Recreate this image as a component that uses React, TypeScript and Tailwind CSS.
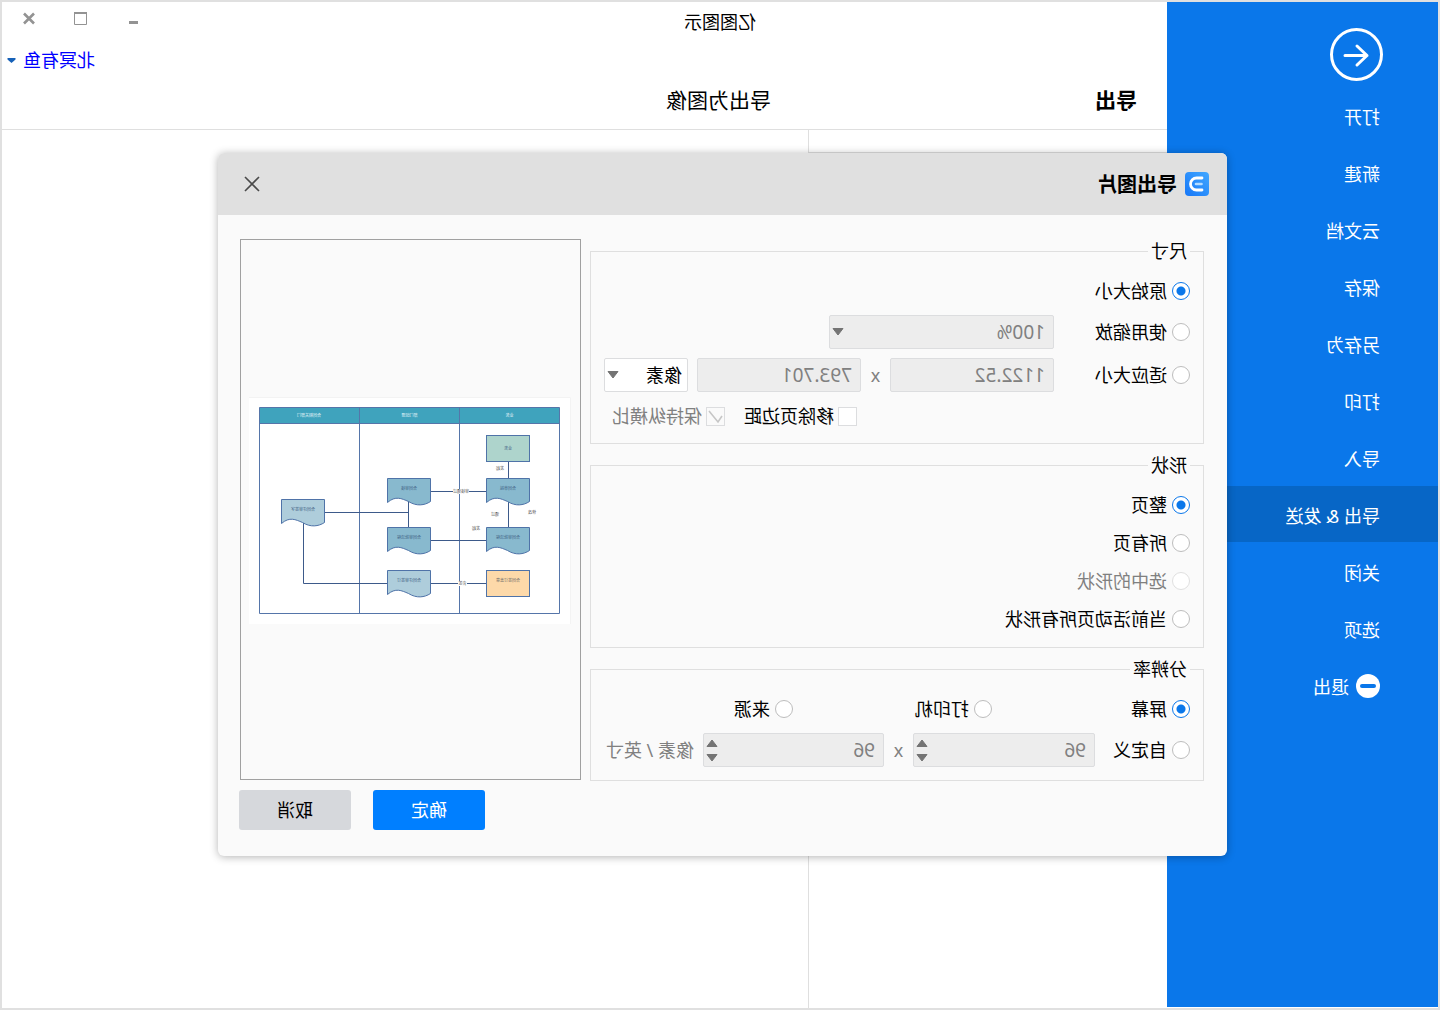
import { ReactNode, useState } from 'react';

const MENU = ['打开', '新建', '云文档', '保存', '另存为', '打印', '导入', '导出 & 发送', '关闭', '选项'];
const ACTIVE = '导出 & 发送';

const DOC_FILL = '#88b9ce';
const DOC_LIGHT = '#aecddb';

interface ChoiceProps {
  name: string;
  value: string;
  current: string;
  onPick: (value: string) => void;
  disabled?: boolean;
  className?: string;
}

function Choice({ name, value, current, onPick, disabled, className = '' }: ChoiceProps) {
  return (
    <label className={`flex h-[26px] shrink-0 items-center gap-[5px] ${disabled ? 'text-[#808080]' : 'text-black'} ${className}`}>
      <input
        type="radio"
        name={name}
        value={value}
        checked={current === value}
        disabled={disabled}
        onChange={() => onPick(value)}
        className="size-[18px] shrink-0 appearance-none rounded-full border border-[#bdbdbd] bg-white checked:border-[#0a77ea] checked:bg-[radial-gradient(circle,#0a77ea_0,#0a77ea_4px,#fff_5px)] disabled:border-[#e0e0e0]"
      />
      {value}
    </label>
  );
}

function Group({ title, className = '', children }: { title: string; className?: string; children: ReactNode }) {
  return (
    <fieldset className={`border border-[#dfdfdf] px-[13px] ${className}`}>
      <legend className="px-[3px] leading-[26px]">{title}</legend>
      {children}
    </fieldset>
  );
}

function Arrow({ up, className = '' }: { up?: boolean; className?: string }) {
  return (
    <svg viewBox="0 0 12 8" className={`h-2 w-3 ${className}`}>
      <path d={up ? 'M1 7.5L6 1L11 7.5Z' : 'M1 0.5L6 7L11 0.5Z'} fill="#747474" stroke="#747474" strokeLinejoin="round" />
    </svg>
  );
}

function Picker({ label, value, disabled, className = '' }: { label: string; value: string; disabled?: boolean; className?: string }) {
  return (
    <div className={`relative shrink-0 ${className}`}>
      <select
        aria-label={label}
        disabled={disabled}
        defaultValue={value}
        className="h-[34px] w-full appearance-none rounded-[2px] border border-[#dcdddf] bg-white pl-[5px] text-black opacity-100 disabled:bg-[#ededed] disabled:pl-2 disabled:text-[19px] disabled:text-[#808080]"
      >
        <option>{value}</option>
      </select>
      <Arrow className="pointer-events-none absolute top-[13px] right-[3px]" />
    </div>
  );
}

function NumberBox({ label, value, spin, className = '' }: { label: string; value: string; spin?: boolean; className?: string }) {
  return (
    <div className={`relative shrink-0 ${className}`}>
      <input
        type="text"
        inputMode="decimal"
        aria-label={label}
        defaultValue={value}
        disabled
        className="h-[34px] w-full rounded-[2px] border border-[#dcdddf] bg-[#ededed] px-2 text-[19px] text-[#808080]"
      />
      {spin && (
        <span className="absolute inset-y-0 right-[3px] flex flex-col justify-center gap-[7px]">
          <button type="button" disabled aria-label="增加"><Arrow up className="block" /></button>
          <button type="button" disabled aria-label="减少"><Arrow className="block" /></button>
        </span>
      )}
    </div>
  );
}

function Times() {
  return <span className="w-[29px] shrink-0 text-center text-[#808080]">x</span>;
}

function Doc({ x, y, fill, text }: { x: number; y: number; fill: string; text: string }) {
  return (
    <g transform={`translate(${x} ${y})`}>
      <path d="M0 0H43V24C35 17 29 20 22 23C14 28 6 27 0 23Z" fill={fill} stroke="#4f73a8" />
      <text x="21.5" y="11" fill="#3f6184">{text}</text>
    </g>
  );
}

function Diagram() {
  return (
    <svg viewBox="0 0 322 227" className="mt-px w-[322px] bg-white font-[Noto_Sans_CJK_SC]" fontSize="4" textAnchor="middle">
      <path d="M0.5 227V0.5H322" fill="none" stroke="#f3f3f3" />
      <rect x="11.5" y="10.5" width="300" height="16" fill="#3fa3bd" />
      <path d="M11.5 10.5H311.5V216.5H11.5ZM11.5 26.5H311.5M111.5 10.5V216.5M211.5 10.5V216.5" fill="none" stroke="#5575a9" />
      <g fill="#e8f6fa">
        <text x="61.5" y="20">业务</text>
        <text x="161.5" y="20">部门经理</text>
        <text x="262" y="20">合同相关部门</text>
      </g>
      <path
        d="M62.5 65V81M62.5 104V130M85 94.5H140M85 143.5H140M85 186.5H140M162.5 104V130M162.5 115.5H246M267.5 126V186.5H184"
        fill="none"
        stroke="#3d5a8a"
      />
      <rect x="41.5" y="38.5" width="43" height="26" fill="#aed4cc" stroke="#4f73a8" />
      <text x="63" y="53" fill="#3f6184">业务</text>
      <Doc x={41.5} y={81.5} fill={DOC_FILL} text="合同草拟" />
      <Doc x={41.5} y={130.5} fill={DOC_FILL} text="合同审批流程" />
      <rect x="41.5" y="173.5" width="43" height="26" fill="#fdd9a9" stroke="#4f73a8" />
      <text x="63" y="185" fill="#6d6a68">合同签订盖章</text>
      <Doc x={140.5} y={81.5} fill={DOC_FILL} text="合同审核" />
      <Doc x={140.5} y={130.5} fill={DOC_FILL} text="合同审批流程" />
      <Doc x={140.5} y={173.5} fill={DOC_LIGHT} text="合同评审签订" />
      <Doc x={246.5} y={102.5} fill={DOC_LIGHT} text="合同评审签字" />
      <rect x="102" y="92" width="16" height="5" fill="#fff" />
      <rect x="104" y="184" width="9" height="5" fill="#fff" />
      <g fill="#555">
        <text x="71" y="72.5">发起</text>
        <text x="110" y="96">审核通过</text>
        <text x="76" y="119">通过</text>
        <text x="39" y="117">修改</text>
        <text x="95" y="132.5">发起</text>
        <text x="108.5" y="188">会签</text>
      </g>
    </svg>
  );
}

function ExportDialog() {
  const [size, setSize] = useState('原始大小');
  const [shape, setShape] = useState('整页');
  const [dpi, setDpi] = useState('屏幕');

  return (
    <div role="dialog" aria-labelledby="export-title" className="w-full max-w-[1009px] rounded-md bg-[#fafafa] shadow-[0_1px_8px_rgba(0,0,0,0.3)]">
      <header className="flex h-[62px] items-center rounded-t-md bg-[#e0e0e0] pr-[26px] pl-[18px]">
        <svg viewBox="0 0 24 24" className="size-6">
          <defs>
            <linearGradient id="logo" x1="0" y1="0" x2="1" y2="1">
              <stop offset="0" stopColor="#42a8ff" />
              <stop offset="1" stopColor="#1677f8" />
            </linearGradient>
          </defs>
          <rect width="24" height="24" rx="4" fill="url(#logo)" />
          <path d="M7 6H12.5A6 6 0 0 1 12.5 18H7" fill="none" stroke="#fff" strokeWidth="2.8" strokeLinecap="round" />
          <path d="M7.5 12H13" stroke="#b5dcff" strokeWidth="2.6" strokeLinecap="round" />
        </svg>
        <h2 id="export-title" className="ml-2 flex-1 pt-[2px] text-[20px] font-bold">导出图片</h2>
        <button type="button" aria-label="关闭">
          <svg viewBox="0 0 16 16" className="size-4">
            <path d="M1 1L15 15M15 1L1 15" stroke="#4a4a4a" strokeWidth="1.6" />
          </svg>
        </button>
      </header>

      <div className="flex gap-[9px] pt-[23px] pr-[22px] pl-[23px]">
        <div className="flex flex-1 flex-col gap-2">
          <Group title="尺寸" className="pt-[14px] pb-[14px]">
            <Choice name="size" value="原始大小" current={size} onPick={setSize} />
            <div className="mt-[11px] flex items-center">
              <Choice name="size" value="使用缩放" current={size} onPick={setSize} className="w-[136px]" />
              <Picker label="缩放" value="100%" disabled className="w-[225px]" />
            </div>
            <div className="mt-[9px] flex items-center">
              <Choice name="size" value="适应大小" current={size} onPick={setSize} className="w-[136px]" />
              <NumberBox label="宽度" value="1122.52" className="w-[164px]" />
              <Times />
              <NumberBox label="高度" value="793.701" className="w-[164px]" />
              <Picker label="单位" value="像素" className="ml-[9px] w-[84px]" />
            </div>
            <div className="mt-[11px] flex h-[26px] items-center justify-end gap-[19px] pr-2">
              <label className="flex items-center gap-1">
                <input type="checkbox" className="size-[19px] appearance-none border border-[#dcdddf] bg-white" />
                移除页边距
              </label>
              <label className="flex items-center gap-1 text-[#808080]">
                <span className="relative flex">
                  <input type="checkbox" defaultChecked disabled className="size-[19px] appearance-none border border-[#dcdddf] bg-[#fafafa]" />
                  <svg viewBox="0 0 19 19" className="pointer-events-none absolute inset-0">
                    <path d="M3 9L7 15L16 4" fill="none" stroke="#c6c6c6" strokeWidth="1.6" />
                  </svg>
                </span>
                保持纵横比
              </label>
            </div>
          </Group>

          <Group title="形状" className="pt-[14px] pb-[15px]">
            <div className="flex flex-col gap-3">
              <Choice name="shape" value="整页" current={shape} onPick={setShape} />
              <Choice name="shape" value="所有页" current={shape} onPick={setShape} />
              <Choice name="shape" value="选中的形状" current={shape} onPick={setShape} disabled />
              <Choice name="shape" value="当前活动页所有形状" current={shape} onPick={setShape} />
            </div>
          </Group>

          <Group title="分辨率" className="pt-[14px] pb-[13px]">
            <div className="flex">
              <Choice name="dpi" value="屏幕" current={dpi} onPick={setDpi} className="w-[198px]" />
              <Choice name="dpi" value="打印机" current={dpi} onPick={setDpi} className="w-[199px]" />
              <Choice name="dpi" value="来源" current={dpi} onPick={setDpi} />
            </div>
            <div className="mt-[11px] flex items-center">
              <Choice name="dpi" value="自定义" current={dpi} onPick={setDpi} className="w-[95px]" />
              <NumberBox label="水平分辨率" value="96" spin className="w-[182px]" />
              <Times />
              <NumberBox label="垂直分辨率" value="96" spin className="w-[181px]" />
              <span className="ml-[9px] whitespace-nowrap text-[#808080]">像素 / 英寸</span>
            </div>
          </Group>
        </div>

        <div className="mt-px mb-px flex w-[341px] shrink-0 items-center justify-center border border-[#a0a0a0]">
          <Diagram />
        </div>
      </div>

      <footer className="flex justify-end gap-[22px] pt-[9px] pr-[21px] pb-[26px]">
        <button type="button" className="h-10 w-28 rounded-[3px] bg-[#007fff] text-white">确定</button>
        <button type="button" className="h-10 w-28 rounded-[3px] bg-[#d6d8dc]">取消</button>
      </footer>
    </div>
  );
}

export default function App() {
  return (
    <div className="relative flex min-h-screen -scale-x-100 border-2 border-[#e0e0e0] bg-white font-['Noto_Sans','Noto_Sans_CJK_SC',sans-serif] text-[18px] leading-[26px] text-black">
      <aside className="mb-px w-[271px] shrink-0 bg-[#0a77ea] text-white">
        <button type="button" aria-label="返回" className="mt-[26px] ml-[55px] block">
          <svg viewBox="0 0 53 53" className="size-[53px]" fill="none" stroke="#fff" strokeWidth="3">
            <circle cx="26.5" cy="26.5" r="25" />
            <path d="M38 27.5H16M26 18L16 27.5L26 37" strokeLinecap="round" strokeLinejoin="round" />
          </svg>
        </button>
        <nav className="mt-[6px] flex flex-col gap-px">
          {MENU.map((item) => (
            <a key={item} href="#" className={`flex h-14 items-center pt-1 pl-[58px] ${item === ACTIVE ? 'bg-[#0766c6]' : ''}`}>
              {item}
            </a>
          ))}
          <a href="#" className="flex h-14 items-center gap-[7px] pt-[2px] pl-[58px]">
            <svg viewBox="0 0 24 24" className="size-6">
              <circle cx="12" cy="12" r="12" fill="#fff" />
              <path d="M6 12H18" stroke="#0a77ea" strokeWidth="4" strokeLinecap="round" />
            </svg>
            <span className="pt-[2px]">退出</span>
          </a>
        </nav>
      </aside>

      <main className="flex flex-1 flex-col">
        <header className="flex h-[128px] border-b border-[#dfdfdf]">
          <div className="flex flex-1 flex-col justify-between pt-[7px] pb-4">
            <h1 className="text-center">亿图图示</h1>
            <div className="flex text-[21px]">
              <h2 className="w-[366px] pl-[30px] font-bold">导出</h2>
              <h2 className="pl-[30px]">导出为图像</h2>
            </div>
          </div>
          <div className="w-[271px] shrink-0">
            <div className="flex h-8 items-center justify-end gap-[38px] pr-5">
              <button type="button" aria-label="最小化">
                <svg viewBox="0 0 14 14" className="block size-[14px]"><path d="M2 11.5H11" stroke="#939393" strokeWidth="3" /></svg>
              </button>
              <button type="button" aria-label="最大化">
                <svg viewBox="0 0 14 14" className="block size-[14px]" fill="none" stroke="#939393">
                  <path d="M1 2H14" strokeWidth="2" />
                  <path d="M1.5 2V13.5H13.5V2" />
                </svg>
              </button>
              <button type="button" aria-label="关闭窗口">
                <svg viewBox="0 0 14 14" className="block size-[14px]"><path d="M2 2.5L12 12.5M12 2.5L2 12.5" stroke="#939393" strokeWidth="2.6" /></svg>
              </button>
            </div>
            <button type="button" className="mt-[13px] mr-[5px] ml-auto flex items-center gap-[7px] text-[#0000ff]">
              北冥有鱼
              <svg viewBox="0 0 9 5" className="h-[5px] w-[9px]"><path d="M0.5 0H8.5V1.5L4.5 5L0.5 1.5Z" fill="#1661b8" /></svg>
            </button>
          </div>
        </header>
        <div className="flex flex-1">
          <section className="w-[359px] shrink-0 border-r border-[#dfdfdf]">
            <div className="h-[23px] border-b border-[#dfdfdf]" />
          </section>
        </div>
      </main>

      <div className="absolute inset-0 flex items-start justify-center pt-[151px] pr-[5px]">
        <ExportDialog />
      </div>
    </div>
  );
}
